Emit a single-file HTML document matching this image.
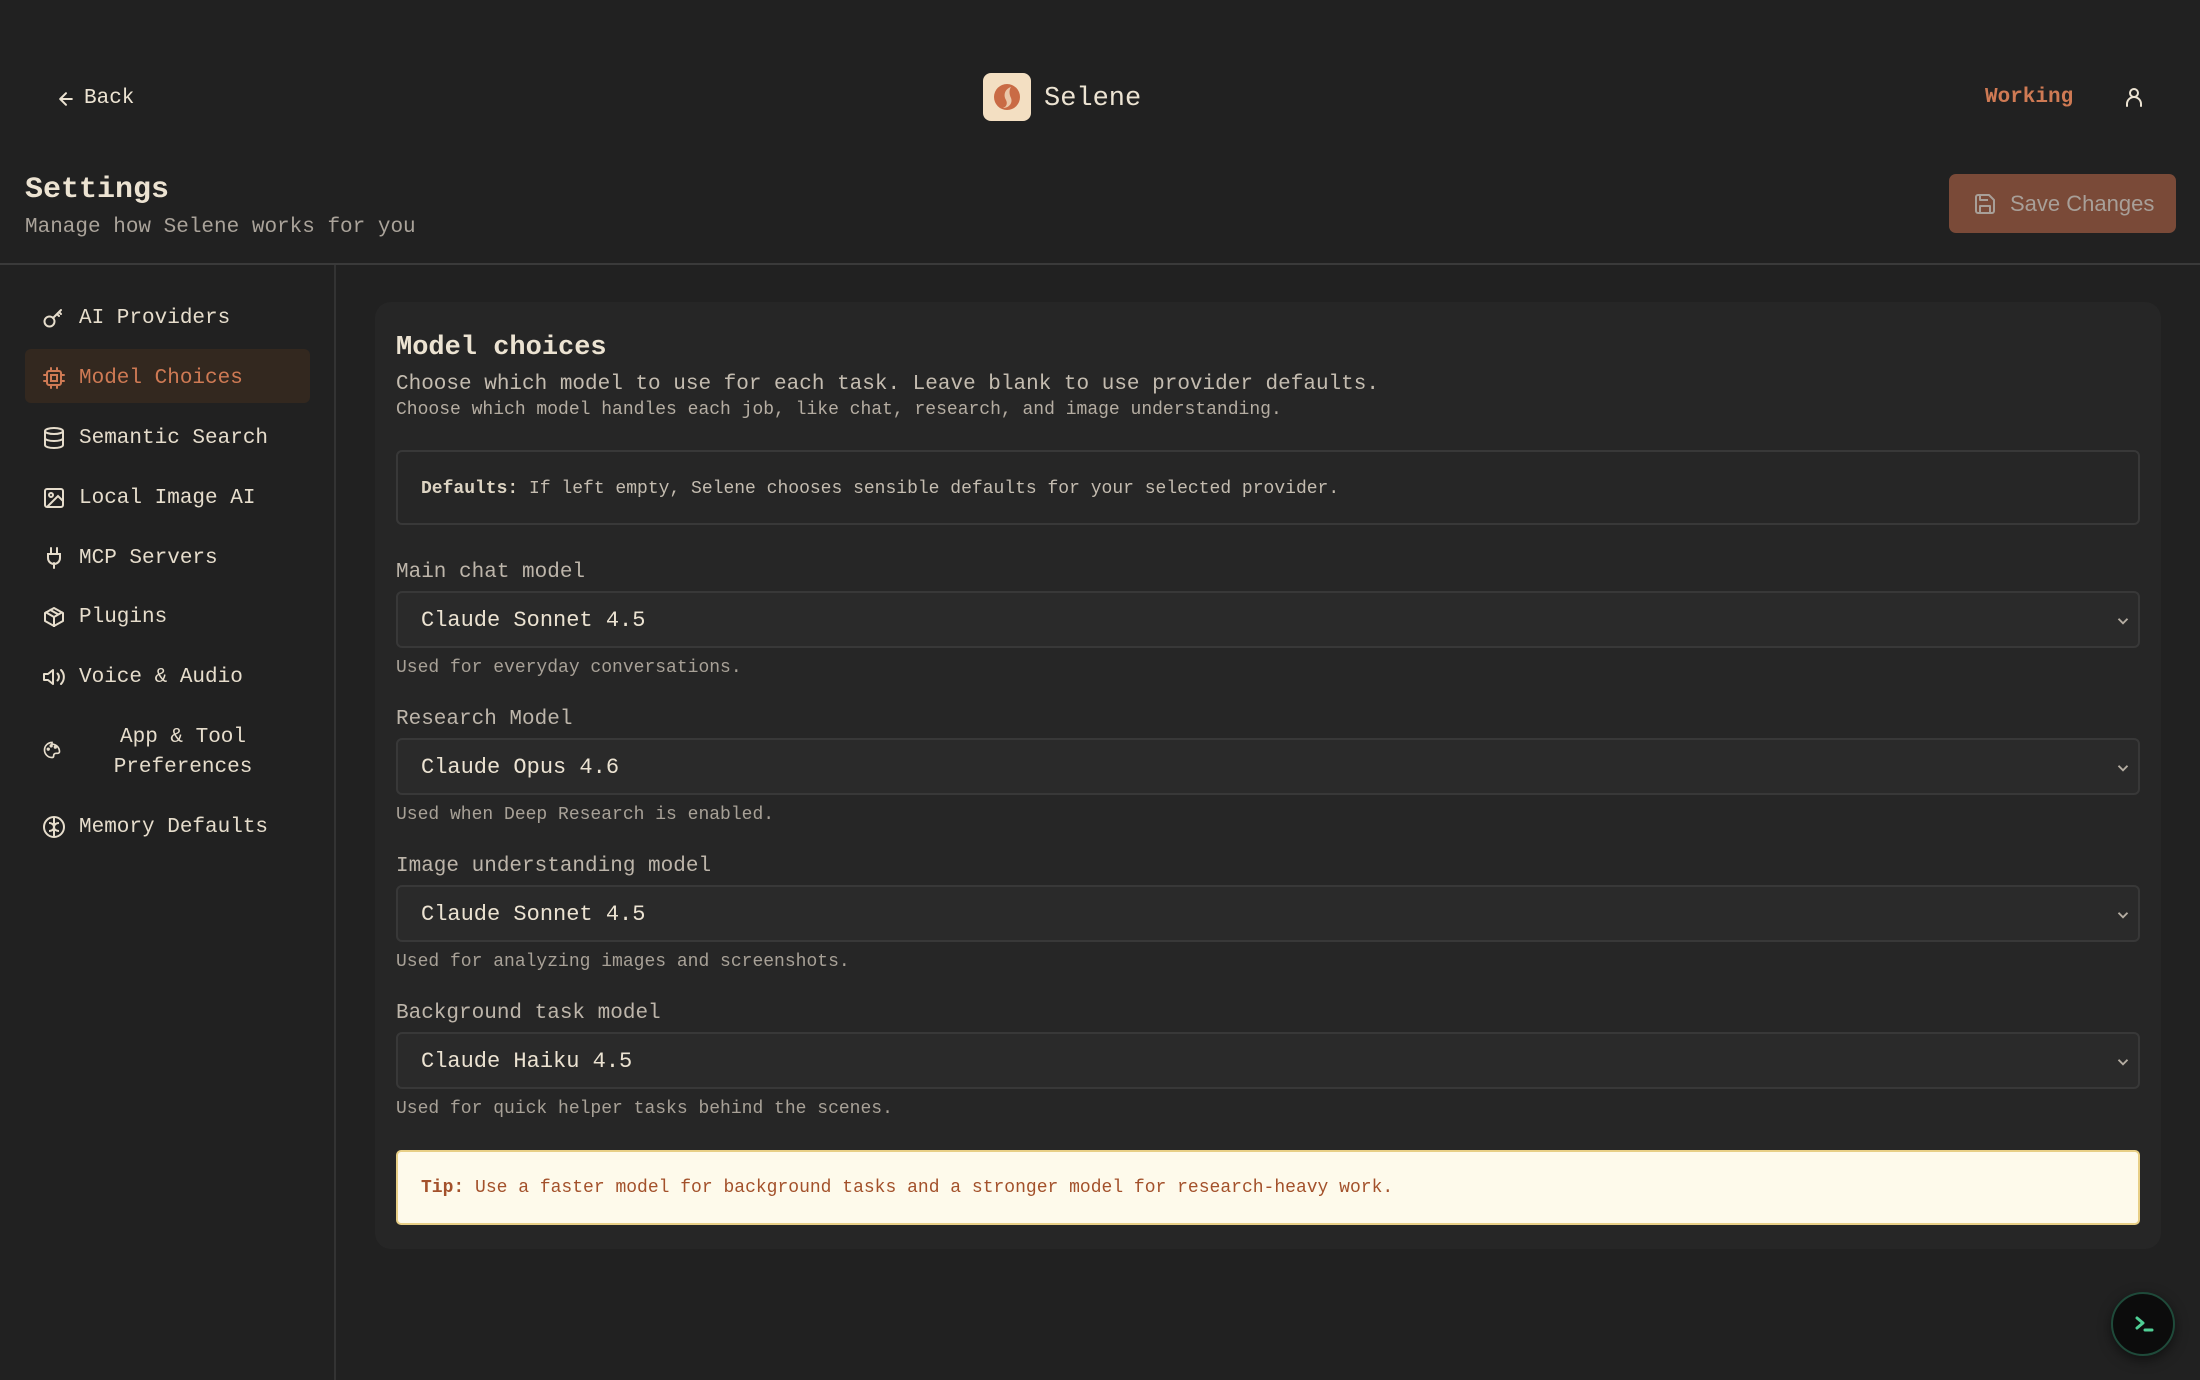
<!DOCTYPE html>
<html><head><meta charset="utf-8"><style>
*{box-sizing:border-box;margin:0;padding:0}
body{width:2200px;height:1380px;background:#212121;font-family:"Liberation Mono",monospace;color:#ece3d2;position:relative;overflow:hidden}
.a{position:absolute;white-space:nowrap}
svg{display:block}
.nav{position:absolute;left:42px;display:flex;align-items:center;font-size:21px;color:#e6ddcc}
.nav svg{width:24px;height:24px;margin-right:13px}
.lbl{position:absolute;left:396px;font-size:21px;color:#bdb5aa}
.sel{position:absolute;left:396px;width:1744px;height:57px;background:#2a2a2a;border:2px solid #383838;border-radius:6px;font-size:22px;color:#ece3d2;padding-left:23px;line-height:55px}
.sel svg{position:absolute;right:6px;top:19px}
.help{position:absolute;left:396px;font-size:18px;color:#a8a197}
</style></head><body>
<div class="a" style="left:56px;top:87px;font-size:21px;display:flex;align-items:center;color:#ece3d2">
<svg width="20" height="20" viewBox="0 0 24 24" fill="none" stroke="#ece3d2" stroke-width="2.4" stroke-linecap="round" stroke-linejoin="round" style="margin-right:8px"><path d="M19 12H5M12 19l-7-7 7-7"/></svg>Back</div>
<div class="a" style="left:983px;top:73px;width:48px;height:48px;border-radius:8px;background:#f3dfc2">
<svg width="48" height="48" viewBox="0 0 48 48"><circle cx="24" cy="24" r="13" fill="#c96b45"/><path d="M28 14c-6 2-8 8-5 13 2 4 0 7-3 8 6 0 10-5 8-10-2-4-2-8 0-11z" fill="#f3dfc2" opacity=".8"/></svg></div>
<div class="a" style="left:1044px;top:84px;font-size:27px;color:#ece3d2">Selene</div>
<div class="a" style="left:1985px;top:86px;font-size:21px;font-weight:bold;color:#cf7a54">Working</div>
<svg class="a" style="left:2122px;top:85px" width="24" height="24" viewBox="0 0 24 24" fill="none" stroke="#ece3d2" stroke-width="2" stroke-linecap="round"><circle cx="12" cy="8" r="4"/><path d="M5 21v-2a7 7 0 0 1 14 0v2"/></svg>
<div class="a" style="left:25px;top:173px;font-size:30px;font-weight:bold;color:#ece3d2">Settings</div>
<div class="a" style="left:25px;top:216px;font-size:21px;color:#aaa39a">Manage how Selene works for you</div>
<div class="a" style="left:1949px;top:174px;width:227px;height:59px;background:#7a4a38;border-radius:7px;font-family:'Liberation Sans',sans-serif;font-size:22px;color:#a89f98;display:flex;align-items:center;padding-left:24px">
<svg width="24" height="24" viewBox="0 0 24 24" fill="none" stroke="#a89f98" stroke-width="2" stroke-linejoin="round" style="margin-right:13px"><path d="M5 3h11l5 5v11a2 2 0 0 1-2 2H5a2 2 0 0 1-2-2V5a2 2 0 0 1 2-2z"/><path d="M7 3v5h8M7 21v-7h10v7"/></svg>Save Changes</div>
<div class="a" style="left:0;top:263px;width:2200px;height:2px;background:#3a3a3a"></div>
<div class="a" style="left:334px;top:265px;width:2px;height:1115px;background:#333"></div>
<div class="a" style="left:25px;top:349px;width:285px;height:54px;background:#33281f;border-radius:6px"></div>
<div class="nav" style="top:306px"><svg viewBox="0 0 24 24" fill="none" stroke="#e6ddcc" stroke-width="2" stroke-linecap="round"><circle cx="7.5" cy="15.5" r="5"/><path d="M11 12l8-8M17 6l2 2M15 8l2 2"/></svg>AI Providers</div>
<div class="nav" style="top:366px;color:#cf7a54"><svg viewBox="0 0 24 24" fill="none" stroke="#cf7a54" stroke-width="2" stroke-linecap="round"><rect x="5" y="5" width="14" height="14" rx="2"/><rect x="9" y="9" width="6" height="6"/><path d="M9 2v3M15 2v3M9 19v3M15 19v3M2 9h3M2 15h3M19 9h3M19 15h3"/></svg>Model Choices</div>
<div class="nav" style="top:426px"><svg viewBox="0 0 24 24" fill="none" stroke="#e6ddcc" stroke-width="2"><ellipse cx="12" cy="5" rx="9" ry="3"/><path d="M3 5v14c0 1.7 4 3 9 3s9-1.3 9-3V5M3 12c0 1.7 4 3 9 3s9-1.3 9-3"/></svg>Semantic Search</div>
<div class="nav" style="top:486px"><svg viewBox="0 0 24 24" fill="none" stroke="#e6ddcc" stroke-width="2"><rect x="3" y="3" width="18" height="18" rx="2"/><circle cx="9" cy="9" r="2"/><path d="M21 15l-5-5L5 21"/></svg>Local Image AI</div>
<div class="nav" style="top:546px"><svg viewBox="0 0 24 24" fill="none" stroke="#e6ddcc" stroke-width="2" stroke-linecap="round"><path d="M9 2v6M15 2v6M12 17v5M6 8h12v4a6 6 0 0 1-12 0z"/></svg>MCP Servers</div>
<div class="nav" style="top:605px"><svg viewBox="0 0 24 24" fill="none" stroke="#e6ddcc" stroke-width="2" stroke-linejoin="round"><path d="M21 16V8l-9-5-9 5v8l9 5z"/><path d="M3.3 7L12 12l8.7-5M12 22V12M7.5 4.5l9 5"/></svg>Plugins</div>
<div class="nav" style="top:665px"><svg viewBox="0 0 24 24" fill="none" stroke="#e6ddcc" stroke-width="2" stroke-linecap="round" stroke-linejoin="round"><path d="M11 5L6 9H2v6h4l5 4z"/><path d="M15.5 8.5a5 5 0 0 1 0 7M19 5a10 10 0 0 1 0 14"/></svg>Voice &amp; Audio</div>
<div class="nav" style="top:740px"><svg viewBox="0 0 24 24" fill="none" stroke="#e6ddcc" stroke-width="2" style="width:20px;height:20px"><path d="M12 3a9 9 0 0 0 0 18c1.5 0 2-1 2-2 0-2 1-3 3-3h2a2 2 0 0 0 2-2 9 9 0 0 0-9-9z"/><circle cx="7.5" cy="11" r="1"/><circle cx="11" cy="7" r="1"/><circle cx="16" cy="8.5" r="1"/></svg></div>
<div class="a" style="left:80px;top:723px;width:206px;text-align:center;font-size:21px;line-height:30px;color:#e6ddcc;white-space:normal">App &amp; Tool<br>Preferences</div>
<div class="nav" style="top:815px"><svg viewBox="0 0 24 24" fill="none" stroke="#e6ddcc" stroke-width="2"><circle cx="12" cy="12" r="10"/><path d="M12 2v20M7 8c2 0 5 1 5 4M17 8c-2 0-5 1-5 4M7 16c2 0 5-1 5-4M17 16c-2 0-5-1-5-4"/></svg>Memory Defaults</div>
<div class="a" style="left:375px;top:302px;width:1786px;height:947px;background:#262626;border-radius:16px"></div>
<div class="a" style="left:396px;top:333px;font-size:27px;font-weight:bold;color:#ece3d2">Model choices</div>
<div class="a" style="left:396px;top:373px;font-size:21px;color:#c4bcb0">Choose which model to use for each task. Leave blank to use provider defaults.</div>
<div class="a" style="left:396px;top:400px;font-size:18px;color:#b5ada2">Choose which model handles each job, like chat, research, and image understanding.</div>
<div class="a" style="left:396px;top:450px;width:1744px;height:75px;border:2px solid #383838;border-radius:6px;background:#262626;font-size:18px;color:#c4bcb0;padding-left:23px;line-height:74px"><b style="color:#ddd4c3">Defaults:</b> If left empty, Selene chooses sensible defaults for your selected provider.</div>

<div class="lbl" style="top:561px">Main chat model</div>
<div class="sel" style="top:591px">Claude Sonnet 4.5<svg width="18" height="18" viewBox="0 0 24 24" fill="none" stroke="#b5ada2" stroke-width="2.5"><path d="M6 9l6 6 6-6"/></svg></div>
<div class="help" style="top:658px">Used for everyday conversations.</div>

<div class="lbl" style="top:708px">Research Model</div>
<div class="sel" style="top:738px">Claude Opus 4.6<svg width="18" height="18" viewBox="0 0 24 24" fill="none" stroke="#b5ada2" stroke-width="2.5"><path d="M6 9l6 6 6-6"/></svg></div>
<div class="help" style="top:805px">Used when Deep Research is enabled.</div>

<div class="lbl" style="top:855px">Image understanding model</div>
<div class="sel" style="top:885px">Claude Sonnet 4.5<svg width="18" height="18" viewBox="0 0 24 24" fill="none" stroke="#b5ada2" stroke-width="2.5"><path d="M6 9l6 6 6-6"/></svg></div>
<div class="help" style="top:952px">Used for analyzing images and screenshots.</div>

<div class="lbl" style="top:1002px">Background task model</div>
<div class="sel" style="top:1032px">Claude Haiku 4.5<svg width="18" height="18" viewBox="0 0 24 24" fill="none" stroke="#b5ada2" stroke-width="2.5"><path d="M6 9l6 6 6-6"/></svg></div>
<div class="help" style="top:1099px">Used for quick helper tasks behind the scenes.</div>

<div class="a" style="left:396px;top:1150px;width:1744px;height:75px;background:#fefaeb;border:2px solid #e8cf86;border-radius:5px;font-size:18px;color:#a3512b;padding-left:23px;line-height:73px"><b>Tip:</b> Use a faster model for background tasks and a stronger model for research-heavy work.</div>

<div class="a" style="left:2111px;top:1292px;width:64px;height:64px;border-radius:50%;background:#0c0c0c;border:2px solid #1f4a3a;box-shadow:0 4px 12px rgba(0,0,0,.5)">
<svg width="60" height="60" viewBox="0 0 60 60" fill="none" stroke="#4fcf95" stroke-width="3" stroke-linecap="round" stroke-linejoin="round"><path d="M24 24l6 5-6 5M32 36h7"/></svg></div>
</body></html>
